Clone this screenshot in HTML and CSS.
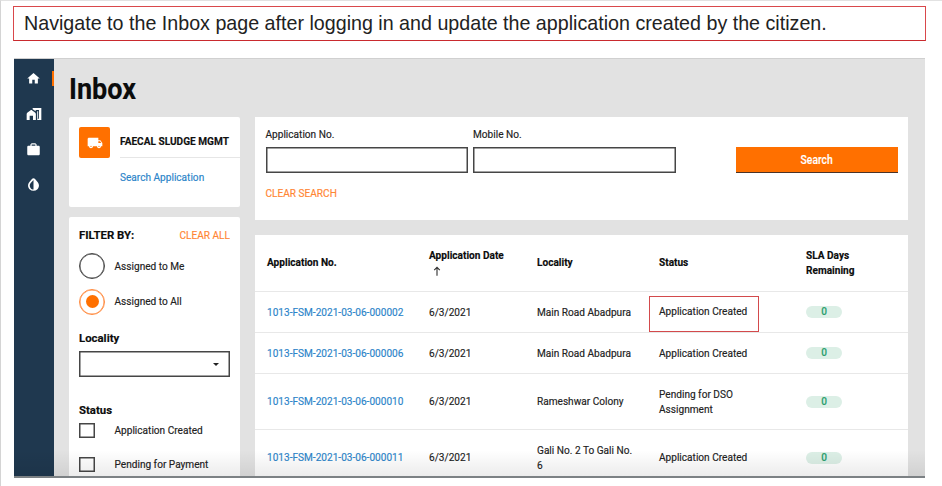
FILE: index.html
```html
<!DOCTYPE html>
<html lang="en">
<head>
<meta charset="utf-8">
<title>Inbox</title>
<link rel="stylesheet" href="styles.css">
</head>
<body>
<div class="page">
  <p class="banner">Navigate to the Inbox page after logging in and update the application created by the citizen.</p>
  <div class="app">
    <nav class="rail">
      <a class="rail-item active"><svg viewBox="0 0 24 24"><path d="M10 20v-6h4v6h5v-8h3L12 3 2 12h3v8z"/></svg></a>
      <a class="rail-item wide"><svg viewBox="0 0 24 24"><path d="M1 21V12c0-1 .5-1.800 1.300-2.400l4.200-3c.9-.6 1.900-.6 2.800 0l4.200 3c.8.6 1.300 1.400 1.300 2.400v9h-4.300v-6.500h-5V21z"/><path d="M10 3h13v18h-6.200v-2h2.700V6h-5v1.800L10 4.800z"/><path d="M16.800 8h1.400v11h-1.400z"/></svg></a>
      <a class="rail-item"><svg viewBox="0 0 24 24"><path d="M20 6h-3V4l-2-2H9L7 4v2H4c-1.100 0-2 .9-2 2v11c0 1.100.9 2 2 2h16c1.100 0 2-.9 2-2V8c0-1.100-.9-2-2-2zm-5 0H9V4h6z"/></svg></a>
      <a class="rail-item"><svg viewBox="0 0 24 24"><path fill-rule="evenodd" d="M12 2c1 0 1.800.5 2.500 1.200l3.700 4.300c4 4.500 2.700 9.500.1 12A8.900 8.900 0 0 1 5.700 19.500c-2.600-2.500-3.900-7.500.1-12l3.700-4.300C10.200 2.500 11 2 12 2zm0 2.800L7.500 9.500c-2.300 2.700-1.800 6.200-.3 8 1.200 1.700 2.800 2.500 4.800 2.500z"/></svg></a>
    </nav>
    <main class="content">
      <h1 class="title">Inbox</h1>
      <div class="columns">
        <aside class="side">
          <section class="card module">
            <div class="module-head">
              <span class="module-icon"><svg viewBox="0 0 24 24"><path d="M20 8h-3V4H3c-1.100 0-2 .9-2 2v11h2c0 1.660 1.340 3 3 3s3-1.340 3-3h6c0 1.660 1.340 3 3 3s3-1.340 3-3h2v-5l-3-4zM6 18a1 1 0 1 1 0-2 1 1 0 0 1 0 2zm13.500-8.500 1.960 2.500H17V9.500h2.500zM18 18a1 1 0 1 1 0-2 1 1 0 0 1 0 2z"/></svg></span>
              <span class="module-name">FAECAL SLUDGE MGMT</span>
            </div>
            <a class="module-link">Search Application</a>
          </section>
          <section class="card filters">
            <div class="filter-head"><span class="filter-title">FILTER BY:</span><a class="clear">CLEAR ALL</a></div>
            <label class="option"><span class="radio"></span>Assigned to Me</label>
            <label class="option"><span class="radio checked"></span>Assigned to All</label>
            <h2 class="group locality">Locality</h2>
            <div class="select"><span class="caret"></span></div>
            <h2 class="group">Status</h2>
            <label class="option check"><span class="box"></span>Application Created</label>
            <label class="option check"><span class="box"></span>Pending for Payment</label>
          </section>
        </aside>
        <div class="main">
          <section class="card search">
            <div class="fields">
              <label class="field">Application No.<span class="input"></span></label>
              <label class="field">Mobile No.<span class="input"></span></label>
              <button class="submit"><span>Search</span></button>
            </div>
            <a class="clear">CLEAR SEARCH</a>
          </section>
          <section class="card table">
            <div class="row head"><span>Application No.</span><span>Application Date<br><svg class="sort" viewBox="0 0 10 12"><path d="M5 12V1.500M1.500 5 5 1.500 8.500 5"/></svg></span><span>Locality</span><span>Status</span><span>SLA Days<br>Remaining</span></div>
            <div class="row"><a>1013-FSM-2021-03-06-000002</a><span>6/3/2021</span><span>Main Road Abadpura</span><span class="marked">Application Created</span><span><b class="pill">0</b></span></div>
            <div class="row"><a>1013-FSM-2021-03-06-000006</a><span>6/3/2021</span><span>Main Road Abadpura</span><span>Application Created</span><span><b class="pill">0</b></span></div>
            <div class="row tall"><a>1013-FSM-2021-03-06-000010</a><span>6/3/2021</span><span>Rameshwar Colony</span><span>Pending for DSO<br>Assignment</span><span><b class="pill">0</b></span></div>
            <div class="row tall"><a>1013-FSM-2021-03-06-000011</a><span>6/3/2021</span><span>Gali No. 2 To Gali No.<br>6</span><span>Application Created</span><span><b class="pill">0</b></span></div>
          </section>
        </div>
      </div>
    </main>
  </div>
</div>
</body>
</html>
```
FILE: styles.css
```css
* { box-sizing: border-box; }
body {
  margin: 0;
  background: #fff;
  font: 10.1px/15px Roboto, sans-serif;
  color: #222;
}
.page {
  height: 486px;
  padding: 5px 16px 0 12px;
  border-top: 1px solid #e2e2e2;
  border-left: 1px solid #d4d4d4;
  overflow: hidden;
}
.banner {
  height: 35px;
  margin: 0 0 17px;
  padding-left: 10px;
  border: 1px solid #d9484b;
  border-bottom-color: #c92a2e;
  font: 19.680px/33px "Liberation Sans", sans-serif;
  white-space: nowrap;
}
.app {
  position: relative;
  display: flex;
  height: 420px;
  margin: 0 1px;
  background: #e2e2e2;
  border-top: 1px solid #d0d0d0;
  overflow: hidden;
  -webkit-text-stroke: .15px;
}
.app::after {
  content: "";
  position: absolute;
  inset: auto 0 0;
  height: 26px;
  border-bottom: 2px solid #7c8184;
  background: linear-gradient(transparent, rgba(0, 0, 0, .075));
}
.rail {
  flex: 0 0 40px;
  padding-top: 11.500px;
  background: #1f384f;
}
.rail-item {
  display: flex;
  align-items: center;
  justify-content: center;
  height: 15.500px;
  margin-bottom: 20px;
  padding-right: 1px;
}
.rail-item.active { border-right: 2.500px solid #ff7000; padding: 0 0 0 1px; }
.rail-item svg { width: 15px; fill: #fff; }
.rail-item.wide svg { width: 16px; }
.content {
  flex: 1;
  padding: 0 17px 0 15px;
}
.title {
  height: 58px;
  margin: 0;
  font: 700 30px/60px Roboto, sans-serif;
  color: #0b0c0c;
  transform: scaleX(.9);
  transform-origin: left;
}
.columns { display: flex; gap: 15px; }
.side { flex: 0 0 171px; }
.main { flex: 1; }
.card { background: #fff; border-radius: 2px; }
.module { height: 90px; margin-bottom: 10px; padding: 10px 0 0 10px; }
.module-head { display: flex; align-items: center; height: 31px; gap: 10px; }
.module-icon {
  display: flex;
  align-items: center;
  justify-content: center;
  width: 31px;
  height: 31px;
  border-radius: 2px;
  background: #ff7000;
}
.module-icon svg { width: 16px; fill: #fff; }
.module-name {
  flex: 1;
  height: 31px;
  border-bottom: 1px solid #e6e6e6;
  font-weight: 700;
  line-height: 30px;
  color: #111;
}
.module-link { display: block; margin: 12px 0 0 41px; color: #2b84c9; }
.filters { height: 300px; padding: 11px 10px; }
.filter-head { display: flex; justify-content: space-between; margin-bottom: 10px; }
.filter-title { font-size: 11.400px; font-weight: 700; color: #0b0c0c; }
.clear { color: #ff8634; }
.option { display: flex; align-items: center; gap: 9.500px; height: 26px; margin-bottom: 9.500px; }
.radio {
  display: flex;
  align-items: center;
  justify-content: center;
  width: 26px;
  height: 26px;
  border: 1px solid #464646;
  border-radius: 50%;
  box-shadow: inset 0 0 0 .5px #464646;
}
.radio.checked { border-color: #ff8b40; box-shadow: inset 0 0 0 .5px #ff8b40; }
.radio.checked::after { content: ""; width: 13px; height: 13px; border-radius: 50%; background: #ff7000; }
.group { margin: 0; font-size: 11.400px; line-height: 15px; color: #0b0c0c; }
.group.locality { margin-top: 16px; }
.select {
  display: flex;
  align-items: center;
  justify-content: flex-end;
  height: 26px;
  margin: 5px 0 26px;
  padding-right: 10px;
  border: 1px solid #464646;
  box-shadow: inset 0 0 0 .5px #464646;
}
.caret { border: solid transparent; border-width: 3px 3px 0; border-top-color: #222; margin-top: 2px; }
.option.check { height: 16px; margin: 5px 0 18px; gap: 20px; }
.box { width: 15.500px; height: 15.500px; border: 1px solid #464646; box-shadow: inset 0 0 0 .5px #464646; }
.search { height: 103px; margin-bottom: 15px; padding: 10px 10px 0 10.500px; border-radius: 0; }
.fields { display: flex; align-items: flex-end; gap: 5px; height: 46px; margin-bottom: 13px; }
.field { width: 202.500px; }
.input {
  display: block;
  height: 26px;
  margin-top: 5px;
  border: 1px solid #464646;
  box-shadow: inset 0 0 0 .5px #464646;
}
.submit {
  width: 162px;
  height: 26px;
  margin-left: auto;
  padding: 0;
  border: 0;
  border-bottom: 1px solid #4b3328;
  background: #ff7000;
  color: #fff;
  font: 500 12px/24px Roboto, sans-serif;
}
.submit span { display: inline-block; transform: scaleX(.86); }
.table { border-radius: 0; }
.row {
  display: grid;
  grid-template-columns: 162px 108px 122px 147px 1fr;
  align-items: center;
  height: 41px;
  padding-left: 12px;
  border-top: 1px solid #e8e8e8;
}
.row.head { height: 56px; border: 0; padding-bottom: 1px; font-weight: 700; color: #0b0c0c; }
.row.tall { height: 56px; }
.row a { color: #2b84c9; }
.sort { display: block; width: 8px; height: 10px; margin: 3px 0 2px 4px; fill: none; stroke: #333; stroke-width: 1.400; }
.marked {
  align-self: end;
  width: 110px;
  height: 36px;
  margin-left: -10px;
  padding-left: 9px;
  border: 1px solid #d34a4c;
  line-height: 30px;
}
.pill {
  display: block;
  width: 36px;
  height: 12px;
  border-radius: 6px;
  background: #dcefe6;
  color: #2ca070;
  font-weight: 500;
  line-height: 12px;
  text-align: center;
}
```
